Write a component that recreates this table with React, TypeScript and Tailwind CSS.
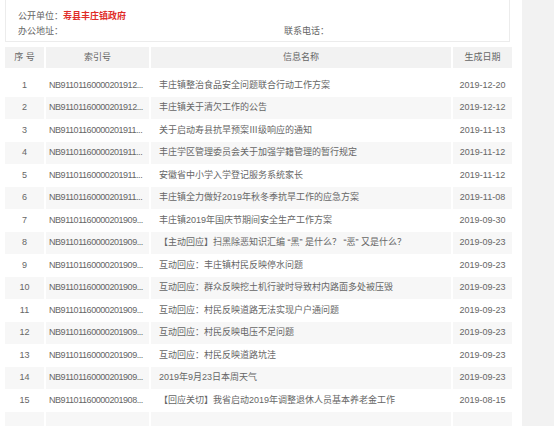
import React from "react";

const rows: [string, string, string][] = [
  ["NB91101160000201912...", "丰庄镇整治食品安全问题联合行动工作方案", "2019-12-20"],
  ["NB91101160000201912...", "丰庄镇关于清欠工作的公告", "2019-12-12"],
  ["NB91101160000201911...", "关于启动寿县抗旱预案Ⅲ级响应的通知", "2019-11-13"],
  ["NB91101160000201911...", "丰庄学区管理委员会关于加强学籍管理的暂行规定", "2019-11-12"],
  ["NB91101160000201911...", "安徽省中小学入学登记服务系统家长", "2019-11-12"],
  ["NB91101160000201911...", "丰庄镇全力做好2019年秋冬季抗旱工作的应急方案", "2019-11-08"],
  ["NB91101160000201909...", "丰庄镇2019年国庆节期间安全生产工作方案", "2019-09-30"],
  ["NB91101160000201909...", "【主动回应】扫黑除恶知识汇编 “黑” 是什么？ “恶” 又是什么？", "2019-09-23"],
  ["NB91101160000201909...", "互动回应：丰庄镇村民反映停水问题", "2019-09-23"],
  ["NB91101160000201909...", "互动回应：群众反映挖土机行驶时导致村内路面多处被压毁", "2019-09-23"],
  ["NB91101160000201909...", "互动回应：村民反映道路无法实现户户通问题", "2019-09-23"],
  ["NB91101160000201909...", "互动回应：村民反映电压不足问题", "2019-09-23"],
  ["NB91101160000201909...", "互动回应：村民反映道路坑洼", "2019-09-23"],
  ["NB91101160000201909...", "2019年9月23日本周天气", "2019-09-23"],
  ["NB91101160000201908...", "【回应关切】我省启动2019年调整退休人员基本养老金工作", "2019-08-15"],
  ["", "", ""],
];

const cols = "grid grid-cols-[39px_103px_300px_59px] gap-x-[2px]";

export default function App() {
  return (
    <div
      className="flex w-[554px] h-[426px] overflow-hidden bg-white text-[9px] text-[#666]"
      style={{ fontFamily: '"Liberation Sans", "Noto Sans CJK SC", sans-serif' }}
    >
      <div className="w-[522px] shrink-0 pl-[5px] pr-[12px]">
        {/* unit info */}
        <div className="h-[43px] mt-[-1px] border border-[#ececec] pl-[12px] pt-[9px] leading-[15px]">
          <div>
            公开单位：<span className="font-bold text-[#e02b27]">寿县丰庄镇政府</span>
          </div>
          <div className="flex">
            <span className="w-[266px]">办公地址：</span>
            <span>联系电话：</span>
          </div>
        </div>

        {/* table header */}
        <div className={`${cols} mt-[5px] h-[21px] text-[#666]`}>
          <div className="bg-[#f2f2f2] flex items-center justify-center">序 号</div>
          <div className="bg-[#f2f2f2] flex items-center justify-center">索引号</div>
          <div className="bg-[#f2f2f2] flex items-center justify-center">信息名称</div>
          <div className="bg-[#f2f2f2] flex items-center justify-center">生成日期</div>
        </div>

        <div className="h-[6px]" />

        {rows.map(([idx, title, date], i) => {
          const bg = i % 2 === 1 ? "bg-[#f7f7f7]" : "bg-white";
          return (
            <div key={i} className={`${cols} h-[22.5px]`}>
              <div className={`${bg} flex items-center justify-center`}>{idx ? i + 1 : ""}</div>
              <div className={`${bg} flex items-center pl-[3px] tracking-[-0.45px] whitespace-nowrap overflow-hidden`}>
                {idx}
              </div>
              <div className={`${bg} flex items-center pl-[8px] whitespace-nowrap overflow-hidden`}>{title}</div>
              <div className={`${bg} flex items-center justify-center`}>{date}</div>
            </div>
          );
        })}
      </div>
      <div className="flex-1 bg-[#f2f2f2]" />
    </div>
  );
}
